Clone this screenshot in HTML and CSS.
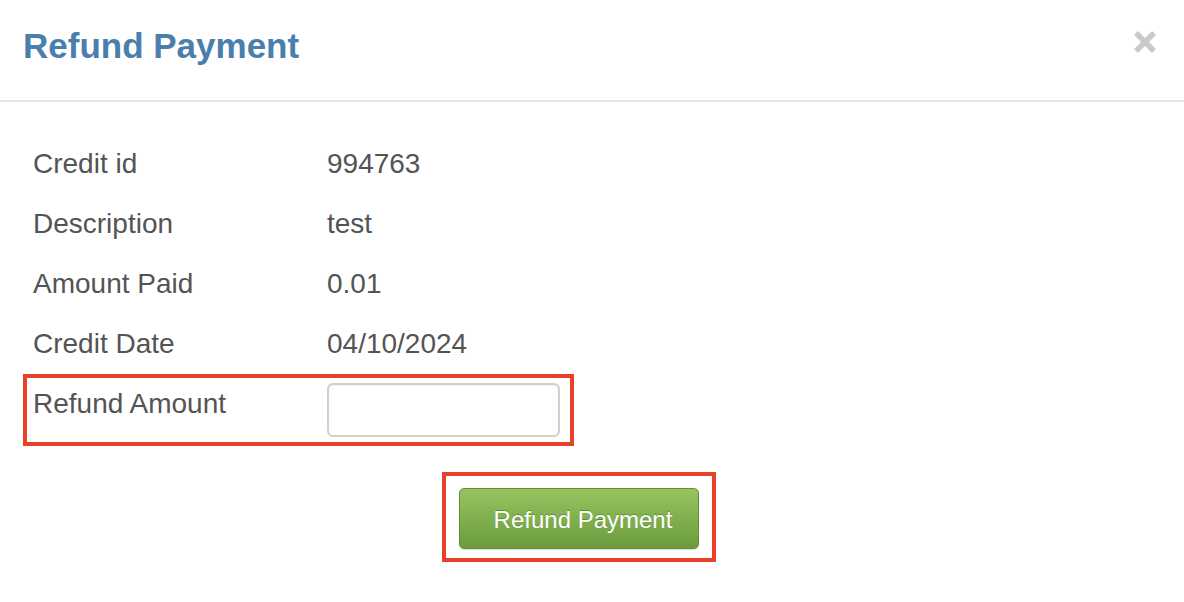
FILE: index.html
```html
<!DOCTYPE html>
<html lang="en">
<head>
  <meta charset="UTF-8" />
  <meta name="viewport" content="width=device-width, initial-scale=1.0" />
  <title>Refund Payment</title>
  <link rel="stylesheet" href="styles.css">
</head>
<body>
<div class="modal">
  <div class="modal-header">
    <h3 class="modal-title">Refund Payment</h3>
    <button class="close" type="button" aria-label="Close">
      <svg width="22" height="22" viewBox="0 0 22 22">
        <path d="M2 2 L20 20 M20 2 L2 20" stroke="#c9c9c9" stroke-width="5.5" fill="none" />
      </svg>
    </button>
  </div>

  <div class="modal-body">
    <div class="row">
      <div class="label">Credit id</div>
      <div class="value">994763</div>
    </div>
    <div class="row">
      <div class="label">Description</div>
      <div class="value">test</div>
    </div>
    <div class="row">
      <div class="label">Amount Paid</div>
      <div class="value">0.01</div>
    </div>
    <div class="row">
      <div class="label">Credit Date</div>
      <div class="value">04/10/2024</div>
    </div>

    <!-- campo resaltado -->
    <div class="row refund-row highlight">
      <label class="label" for="refundAmount">Refund Amount</label>
      <input type="text" id="refundAmount" name="refundAmount" />
    </div>

    <div class="actions">
      <div class="highlight button-box">
        <button class="btn-success" type="submit">Refund Payment</button>
      </div>
    </div>
  </div>
</div>
</body>
</html>
```

FILE: styles.css
```css
body {
  margin: 0;
  background: #fff;
  font-family: "Liberation Sans", Arial, Helvetica, sans-serif;
  color: #545454;
}

.modal-header {
  height: 100px;
  border-bottom: 2px solid #e5e5e5;
  display: flex;
  align-items: flex-start;
  justify-content: space-between;
  padding: 0 28px 0 23px;
}

.modal-title {
  margin: 0;
  padding-top: 26px;
  font-size: 35px;
  line-height: 40px;
  font-weight: bold;
  color: #4a7eac;
}

.close {
  background: none;
  border: none;
  padding: 0;
  margin-top: 31px;
  cursor: pointer;
}

.modal-body {
  padding: 32px 49px 0 23px;
}

.row {
  display: flex;
  height: 60px;
  padding-left: 10px;
  font-size: 28px;
  line-height: 60px;
}

.label {
  width: 294px;
  flex: none;
}

.highlight {
  border: 4px solid #e8412a;
}

.refund-row {
  width: 537px;
  height: 64px;
  padding-left: 6px;
  box-sizing: content-box;
}

.refund-row .label {
  line-height: 32px;
  padding-top: 10px;
}

.refund-row input {
  width: 233px;
  height: 54px;
  margin-top: 5px;
  box-sizing: border-box;
  border: 2px solid #cfcfcf;
  border-radius: 6px;
  font-size: 24px;
  padding: 0 10px;
  box-shadow: inset 0 1px 2px rgba(0,0,0,0.06);
}

.actions {
  text-align: center;
  margin-top: 26px;
}

.button-box {
  display: inline-block;
  padding: 12px 13px 9px 13px;
}

.btn-success {
  display: block;
  width: 240px;
  height: 61px;
  padding: 2px 0 0 8px;
  font-family: "Liberation Sans", Arial, Helvetica, sans-serif;
  font-size: 24px;
  color: #fff;
  background: linear-gradient(to bottom, #97c45f, #6b9b3e);
  border: 1px solid #62903a;
  border-radius: 5px;
  text-shadow: 0 -1px 0 rgba(0,0,0,0.25);
  box-shadow: 0 1px 1px rgba(0,0,0,0.15);
  cursor: pointer;
}

.btn-success:hover {
  background: #6b9b3e;
}
```
